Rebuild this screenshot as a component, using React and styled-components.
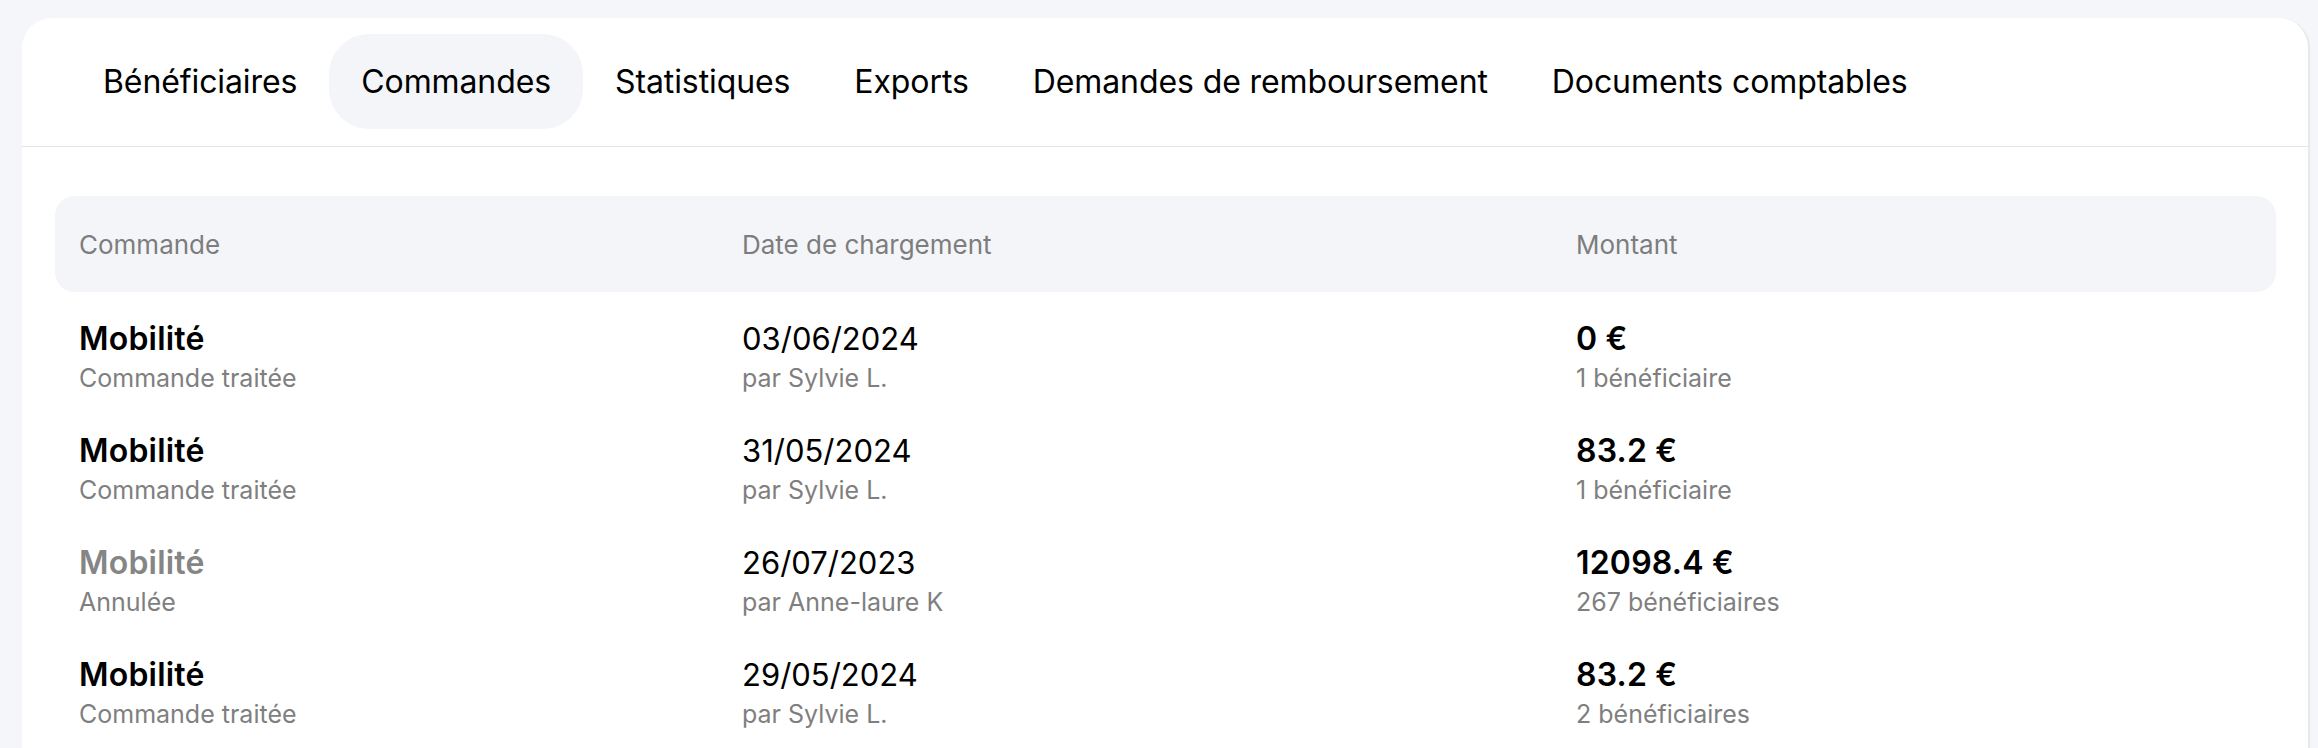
import React from "react";
import styled, { createGlobalStyle } from "styled-components";

const Global = createGlobalStyle`
  html, body { margin: 0; padding: 0; background: #f5f6fa; overflow: hidden; }
  body { font-family: Inter, "Noto Sans", sans-serif; color: #000; }
  * { box-sizing: border-box; }
`;

const Page = styled.div`
  height: 748px;
  padding: 18px 8px 0 22px;
`;

const Card = styled.div`
  background: #fff;
  border-radius: 30px 30px 0 0;
  border-right: 2px solid #e8e8eb;
  min-height: 800px;
`;

const TabBar = styled.nav`
  display: flex;
  align-items: center;
  padding: 16px 49px 17px;
  border-bottom: 1px solid #e4e4e7;
`;

const Tab = styled.div`
  height: 95px;
  display: flex;
  align-items: center;
  padding: 0 32px;
  border-radius: 40px;
  font-size: 32px;
  letter-spacing: -0.1px;
  color: #000;
  background: ${(p) => (p.$active ? "#f4f5f9" : "transparent")};
  white-space: nowrap;
`;

const TableWrap = styled.div`
  padding: 49px 32px 0 33px;
`;

const Grid = styled.div`
  display: grid;
  grid-template-columns: 663px 834px 1fr;
  padding: 0 24px;
`;

const Header = styled(Grid)`
  height: 96px;
  align-items: center;
  background: #f4f5f9;
  border-radius: 20px;
`;

const HeadCell = styled.div`
  font-size: 26px;
  color: #7d7d7d;
`;

const Row = styled(Grid)`
  height: 112px;
  padding-top: 28px;
`;

const Cell = styled.div`
  display: flex;
  flex-direction: column;
`;

const Title = styled.div`
  font-size: ${(p) => (p.$bold ? "32px" : "31px")};
  line-height: 38px;
  font-weight: ${(p) => (p.$bold ? 600 : 400)};
  color: ${(p) => (p.$muted ? "#858585" : "#000")};
  letter-spacing: ${(p) => (p.$bold ? "0.2px" : "0")};
`;

const Sub = styled.div`
  font-size: 25px;
  line-height: 36px;
  margin-top: 2px;
  color: #7f7f7f;
`;

const tabs = [
  "Bénéficiaires",
  "Commandes",
  "Statistiques",
  "Exports",
  "Demandes de remboursement",
  "Documents comptables",
];

const rows = [
  { name: "Mobilité", status: "Commande traitée", date: "03/06/2024", by: "par Sylvie L.", amount: "0 €", count: "1 bénéficiaire" },
  { name: "Mobilité", status: "Commande traitée", date: "31/05/2024", by: "par Sylvie L.", amount: "83.2 €", count: "1 bénéficiaire" },
  { name: "Mobilité", status: "Annulée", date: "26/07/2023", by: "par Anne-laure K", amount: "12098.4 €", count: "267 bénéficiaires", cancelled: true },
  { name: "Mobilité", status: "Commande traitée", date: "29/05/2024", by: "par Sylvie L.", amount: "83.2 €", count: "2 bénéficiaires" },
];

export default function App() {
  return (
    <>
      <Global />
      <Page>
        <Card>
          <TabBar>
            {tabs.map((t) => (
              <Tab key={t} $active={t === "Commandes"}>{t}</Tab>
            ))}
          </TabBar>
          <TableWrap>
            <Header>
              <HeadCell>Commande</HeadCell>
              <HeadCell>Date de chargement</HeadCell>
              <HeadCell>Montant</HeadCell>
            </Header>
            {rows.map((r, i) => (
              <Row key={i}>
                <Cell>
                  <Title $bold $muted={r.cancelled}>{r.name}</Title>
                  <Sub>{r.status}</Sub>
                </Cell>
                <Cell>
                  <Title>{r.date}</Title>
                  <Sub>{r.by}</Sub>
                </Cell>
                <Cell>
                  <Title $bold>{r.amount}</Title>
                  <Sub>{r.count}</Sub>
                </Cell>
              </Row>
            ))}
          </TableWrap>
        </Card>
      </Page>
    </>
  );
}
